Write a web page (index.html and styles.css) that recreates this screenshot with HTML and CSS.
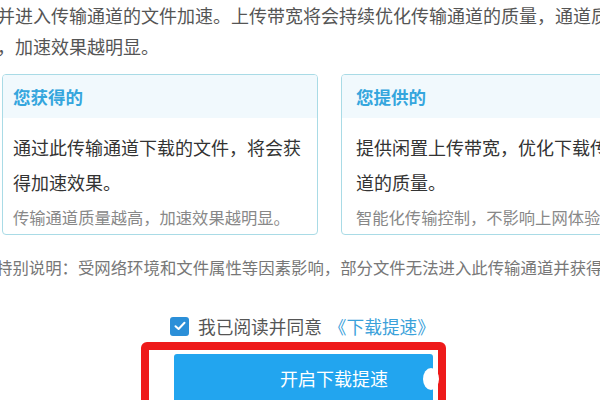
FILE: index.html
```html
<!DOCTYPE html>
<html lang="zh-CN">
<head>
    <meta charset="utf-8"/>
    <meta name="viewport" content="width=device-width, initial-scale=1"/>
    <link rel="stylesheet" href="styles.css">
</head>
<body>

    <div class="page">
        <p class="intro">并进入传输通道的文件加速。上传带宽将会持续优化传输通道的质量，通道质量越高<br>，加速效果越明显。</p>

        <div class="cards">
            <div class="card">
                <div class="card-head">您获得的</div>
                <div class="card-body">
                    <p class="main">通过此传输通道下载的文件，将会获得加速效果。</p>
                    <p class="sub">传输通道质量越高，加速效果越明显。</p>
                </div>
            </div>
            <div class="card card-right">
                <div class="card-head">您提供的</div>
                <div class="card-body">
                    <p class="main">提供闲置上传带宽，优化下载传输通道的质量。</p>
                    <p class="sub">智能化传输控制，不影响上网体验。</p>
                </div>
            </div>
        </div>

        <p class="note">特别说明：受网络环境和文件属性等因素影响，部分文件无法进入此传输通道并获得加速效果。</p>

        <label class="agree">
            <span class="check">
                <svg width="12" height="10" viewBox="0 0 12 10"><path d="M1.5 5.2 L4.6 8 L10.5 1.8" fill="none" stroke="#fff" stroke-width="2" stroke-linecap="round" stroke-linejoin="round"/></svg>
            </span>
            <span>我已阅读并同意</span>
            <a class="link">《下载提速》</a>
        </label>

        <div class="highlight">
            <button type="button" class="start">开启下载提速</button>
        </div>
    </div>

</body>
</html>
```

FILE: styles.css
```css
/* captura ampliada, o conteúdo começa cortado à esquerda */

html, body {
    margin: 0;
    padding: 0;
    background-color: #fff;
    overflow: hidden;
}

body {
    width: 600px;
    height: 400px;
    font-family: "Noto Sans CJK SC", "Noto Sans", sans-serif;
    color: #333;
}

.page {
    margin-left: -3px;
    width: 720px;
}

p {
    margin: 0;
}

.intro {
    font-size: 18px;
    line-height: 31px;
    color: #555;
    white-space: nowrap;
}

.cards {
    display: flex;
    gap: 23px;
    margin-top: 12px;
    margin-left: 5px;
}

.card {
    width: 314px;
    height: 159px;
    border: 1px solid #a9dbe6;
    border-radius: 4px;
    overflow: hidden;
    flex-shrink: 0;
}

.card-head {
    height: 43px;
    line-height: 43px;
    padding-left: 10px;
    background-color: #f1f9fd;
    color: #35a6dd;
    font-size: 17.5px;
    font-weight: bold;
}

.card-right .card-head,
.card-right .card-body {
    padding-left: 14px;
}

.card-body {
    padding: 12px 10px 0 10px;
}

.main {
    font-size: 18px;
    line-height: 35px;
    color: #333;
}

.sub {
    font-size: 16.3px;
    line-height: 35px;
    color: #888;
    white-space: nowrap;
}

.note {
    margin-top: 20px;
    margin-left: -1px;
    font-size: 16.4px;
    line-height: 24px;
    color: #777;
    white-space: nowrap;
}

.agree {
    display: flex;
    align-items: center;
    height: 20px;
    margin-top: 37px;
    padding-left: 173px;
    font-size: 17.7px;
    color: #555;
}

.check {
    display: flex;
    align-items: center;
    justify-content: center;
    width: 19px;
    height: 19px;
    margin-right: 9px;
    border-radius: 3px;
    background-color: #2b8fd8;
}

.link {
    margin-left: 7px;
    color: #3aa1da;
}

.highlight {
    box-sizing: border-box;
    width: 305px;
    height: 70px;
    margin-top: 6px;
    margin-left: 144px;
    border: 8px solid #ee1a1a;
    border-radius: 6px;
    padding: 4px 0 0 25px;
}

.start {
    position: relative;
    display: block;
    width: 259px;
    height: 48px;
    border: none;
    border-radius: 3px;
    padding: 0 0 0 106px;
    text-align: left;
    background-color: #22a5ef;
    color: #fff;
    font-family: "Noto Sans CJK SC", "Noto Sans", sans-serif;
    font-size: 18px;
}

/* pequena marca branca na borda direita do botão */
.start::after {
    content: "";
    position: absolute;
    right: -6px;
    top: 14px;
    width: 16px;
    height: 22px;
    border-radius: 50%;
    background-color: #fff;
}
```
